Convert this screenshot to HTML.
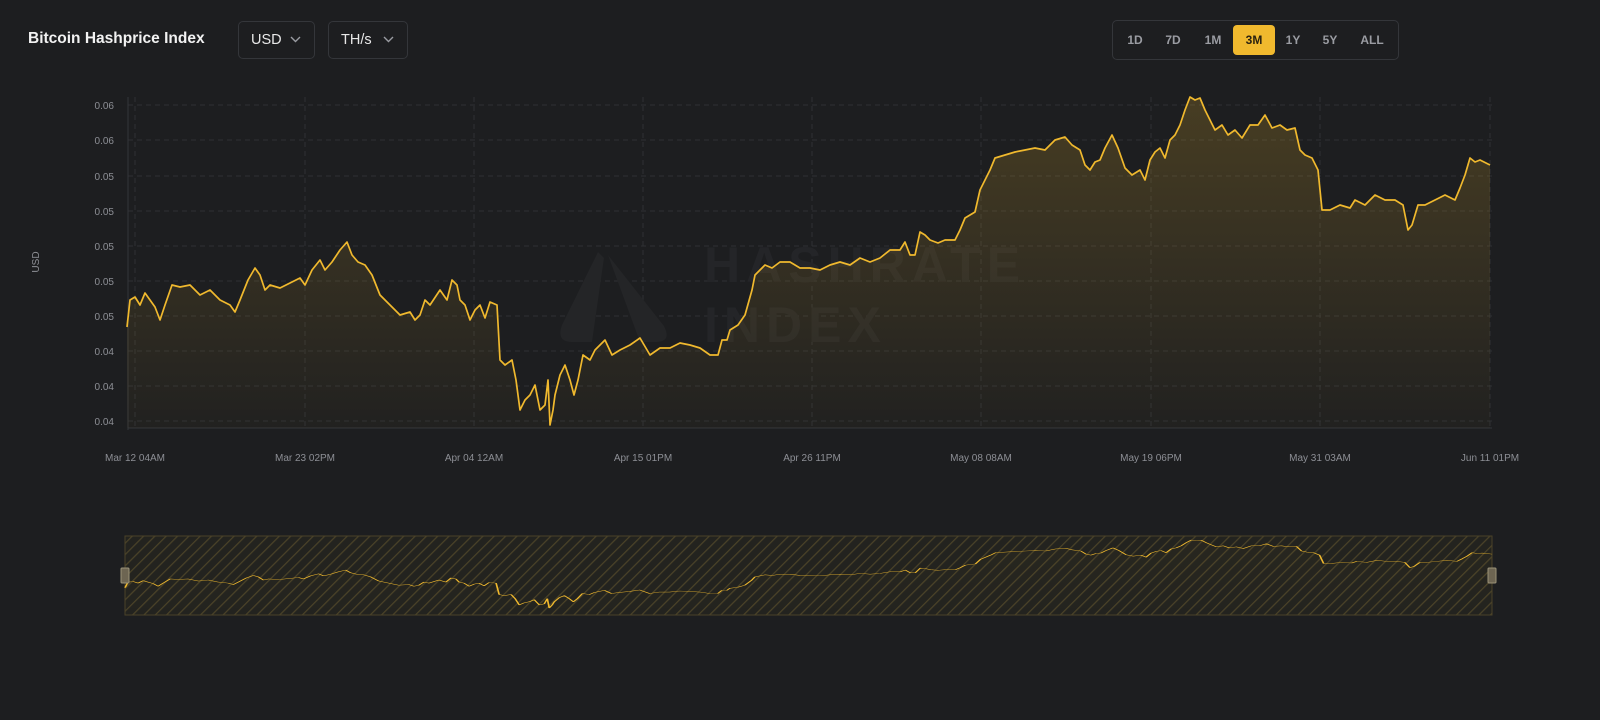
<!DOCTYPE html>
<html><head><meta charset="utf-8"><style>
html,body{margin:0;padding:0;background:#1d1e20;width:1600px;height:720px;overflow:hidden;font-family:"Liberation Sans",sans-serif}
.t{position:absolute;left:28px;top:30px;color:#f2f2f2;font-weight:bold;font-size:15.5px}
.dd{position:absolute;top:21px;height:38px;border:1px solid #34363a;border-radius:5px;box-sizing:border-box;color:#e8e8e8;font-size:14.5px;line-height:36px;padding-left:12px}
.dd svg{position:absolute;top:14px}
.rg{position:absolute;left:1112px;top:20px;width:287px;height:40px;border:1px solid #34363a;border-radius:5px;box-sizing:border-box}
.rg span{position:absolute;top:4px;height:30px;line-height:30px;font-size:12px;font-weight:bold;color:#9a9ca2;text-align:center}
.rg .a{background:#f0b92e;color:#2a2210;border-radius:4px}
</style></head><body>
<div class="t">Bitcoin Hashprice Index</div>
<div class="dd" style="left:238px;width:77px">USD<svg style="left:51px" width="11" height="7"><path d="M1 1l4.5 4.5L10 1" stroke="#9a9ca2" fill="none" stroke-width="1.4"/></svg></div>
<div class="dd" style="left:328px;width:80px">TH/s<svg style="left:54px" width="11" height="7"><path d="M1 1l4.5 4.5L10 1" stroke="#9a9ca2" fill="none" stroke-width="1.4"/></svg></div>
<div class="rg">
<span style="left:8px;width:28px">1D</span><span style="left:46px;width:28px">7D</span><span style="left:85px;width:30px">1M</span><span class="a" style="left:120px;width:42px">3M</span><span style="left:166px;width:28px">1Y</span><span style="left:203px;width:28px">5Y</span><span style="left:242px;width:34px">ALL</span>
</div>
<svg width="1600" height="720" style="position:absolute;left:0;top:0" font-family="Liberation Sans, sans-serif">
<defs>
<linearGradient id="g" x1="0" y1="97" x2="0" y2="428" gradientUnits="userSpaceOnUse"><stop offset="0" stop-color="#f0b92e" stop-opacity="0.2"/><stop offset="1" stop-color="#f0b92e" stop-opacity="0.02"/></linearGradient>
<pattern id="h" width="8" height="8" patternUnits="userSpaceOnUse" patternTransform="rotate(45)"><rect width="8" height="8" fill="#23231f"/><line x1="0" y1="0" x2="0" y2="8" stroke="#4a4228" stroke-width="2.5"/></pattern>
</defs>
<g stroke="#2e3033" stroke-dasharray="5 4" stroke-width="1">
<line x1="128" x2="1492" y1="105" y2="105"/><line x1="128" x2="1492" y1="140" y2="140"/><line x1="128" x2="1492" y1="176" y2="176"/><line x1="128" x2="1492" y1="211" y2="211"/><line x1="128" x2="1492" y1="246" y2="246"/><line x1="128" x2="1492" y1="281" y2="281"/><line x1="128" x2="1492" y1="316" y2="316"/><line x1="128" x2="1492" y1="351" y2="351"/><line x1="128" x2="1492" y1="386" y2="386"/><line x1="128" x2="1492" y1="421" y2="421"/>
<line x1="135" x2="135" y1="97" y2="430"/><line x1="305" x2="305" y1="97" y2="430"/><line x1="474" x2="474" y1="97" y2="430"/><line x1="643" x2="643" y1="97" y2="430"/><line x1="812" x2="812" y1="97" y2="430"/><line x1="981" x2="981" y1="97" y2="430"/><line x1="1151" x2="1151" y1="97" y2="430"/><line x1="1320" x2="1320" y1="97" y2="430"/><line x1="1490" x2="1490" y1="97" y2="430"/>
</g>
<line x1="128" x2="128" y1="97" y2="430" stroke="#34363a"/>
<line x1="128" x2="1492" y1="428" y2="428" stroke="#34363a"/>
<g fill="#242527"><path d="M598 252L562 325Q556 342 572 342L592 342L604 258Z"/><path d="M608 255L640 342L656 342Q672 342 664 326Z"/></g>
<text x="704" y="282" font-size="50" font-weight="bold" fill="#242528" letter-spacing="6">HASHRATE</text>
<text x="704" y="342" font-size="50" font-weight="bold" fill="#242528" letter-spacing="6">INDEX</text>
<path id="A" d="M127 327L130 300L135 297L140 305L145 293L150 300L155 307L160 320L165 305L172 285L180 287L190 285L200 295L210 290L220 300L230 305L235 312L240 300L248 280L255 268L260 275L265 290L270 285L280 288L290 283L300 278L305 285L312 270L320 260L325 270L332 262L340 250L347 242L352 255L358 262L365 265L372 275L380 295L390 305L400 315L410 312L415 320L420 315L425 300L430 305L440 290L447 300L452 280L457 285L460 300L465 305L470 320L475 310L480 305L485 318L490 302L497 305L500 360L505 365L512 360L516 380L520 410L525 400L530 395L535 385L540 410L545 405L548 380L550 425L553 410L555 395L560 375L565 365L570 380L574 395L578 380L583 355L590 360L595 350L600 345L605 340L612 355L620 350L630 345L640 338L650 355L660 348L670 348L680 343L690 345L700 348L710 355L718 355L722 340L727 340L730 330L738 325L745 315L752 290L755 275L760 270L765 265L772 268L780 262L790 262L800 268L810 268L820 270L830 265L840 262L850 265L860 258L870 262L880 258L890 250L900 250L905 242L910 255L915 255L920 232L925 235L930 240L938 243L945 240L955 240L960 230L965 218L975 212L980 190L990 170L995 158L1005 155L1015 152L1025 150L1035 148L1045 150L1055 140L1065 137L1072 145L1080 150L1085 165L1090 170L1095 162L1100 160L1105 148L1112 135L1118 148L1125 168L1132 175L1140 170L1145 180L1150 160L1155 152L1160 148L1165 158L1170 140L1175 135L1180 125L1185 110L1190 97L1195 100L1200 98L1205 110L1210 120L1215 130L1222 125L1228 135L1235 130L1242 138L1250 125L1258 125L1265 115L1272 128L1280 125L1287 130L1295 128L1300 150L1305 155L1312 158L1318 170L1322 210L1330 210L1340 205L1350 208L1355 200L1365 205L1375 195L1385 200L1395 200L1403 205L1408 230L1412 225L1418 205L1425 205L1435 200L1445 195L1455 200L1460 188L1465 175L1470 158L1475 162L1480 160L1490 165L1490 428L127 428Z" fill="url(#g)"/>
<path id="L" d="M127 327L130 300L135 297L140 305L145 293L150 300L155 307L160 320L165 305L172 285L180 287L190 285L200 295L210 290L220 300L230 305L235 312L240 300L248 280L255 268L260 275L265 290L270 285L280 288L290 283L300 278L305 285L312 270L320 260L325 270L332 262L340 250L347 242L352 255L358 262L365 265L372 275L380 295L390 305L400 315L410 312L415 320L420 315L425 300L430 305L440 290L447 300L452 280L457 285L460 300L465 305L470 320L475 310L480 305L485 318L490 302L497 305L500 360L505 365L512 360L516 380L520 410L525 400L530 395L535 385L540 410L545 405L548 380L550 425L553 410L555 395L560 375L565 365L570 380L574 395L578 380L583 355L590 360L595 350L600 345L605 340L612 355L620 350L630 345L640 338L650 355L660 348L670 348L680 343L690 345L700 348L710 355L718 355L722 340L727 340L730 330L738 325L745 315L752 290L755 275L760 270L765 265L772 268L780 262L790 262L800 268L810 268L820 270L830 265L840 262L850 265L860 258L870 262L880 258L890 250L900 250L905 242L910 255L915 255L920 232L925 235L930 240L938 243L945 240L955 240L960 230L965 218L975 212L980 190L990 170L995 158L1005 155L1015 152L1025 150L1035 148L1045 150L1055 140L1065 137L1072 145L1080 150L1085 165L1090 170L1095 162L1100 160L1105 148L1112 135L1118 148L1125 168L1132 175L1140 170L1145 180L1150 160L1155 152L1160 148L1165 158L1170 140L1175 135L1180 125L1185 110L1190 97L1195 100L1200 98L1205 110L1210 120L1215 130L1222 125L1228 135L1235 130L1242 138L1250 125L1258 125L1265 115L1272 128L1280 125L1287 130L1295 128L1300 150L1305 155L1312 158L1318 170L1322 210L1330 210L1340 205L1350 208L1355 200L1365 205L1375 195L1385 200L1395 200L1403 205L1408 230L1412 225L1418 205L1425 205L1435 200L1445 195L1455 200L1460 188L1465 175L1470 158L1475 162L1480 160L1490 165" fill="none" stroke="#f0b92e" stroke-width="1.7" stroke-linejoin="round"/>
<g fill="#8d8f95" font-size="10" text-anchor="end">
<text x="114" y="109">0.06</text><text x="114" y="144">0.06</text><text x="114" y="180">0.05</text><text x="114" y="215">0.05</text><text x="114" y="250">0.05</text><text x="114" y="285">0.05</text><text x="114" y="320">0.05</text><text x="114" y="355">0.04</text><text x="114" y="390">0.04</text><text x="114" y="425">0.04</text>
</g>
<text transform="translate(39 262) rotate(-90)" fill="#8d8f95" font-size="10" text-anchor="middle">USD</text>
<g fill="#8d8f95" font-size="10" text-anchor="middle">
<text x="135" y="461">Mar 12 04AM</text><text x="305" y="461">Mar 23 02PM</text><text x="474" y="461">Apr 04 12AM</text><text x="643" y="461">Apr 15 01PM</text><text x="812" y="461">Apr 26 11PM</text><text x="981" y="461">May 08 08AM</text><text x="1151" y="461">May 19 06PM</text><text x="1320" y="461">May 31 03AM</text><text x="1490" y="461">Jun 11 01PM</text>
</g>
<rect x="125" y="536" width="1367" height="79" fill="url(#h)" stroke="#4a4228"/>
<g transform="translate(-2.38 519.9) scale(1.003 0.2073)">
<use href="#A" fill="#f0b92e" fill-opacity="0.12" stroke="none"/>
<use href="#L" stroke-width="1.2" vector-effect="non-scaling-stroke"/>
</g>
<rect x="121" y="568" width="8" height="15" rx="1" fill="#6d6552" stroke="#9a9278"/>
<rect x="1488" y="568" width="8" height="15" rx="1" fill="#6d6552" stroke="#9a9278"/>
</svg>
</body></html>
